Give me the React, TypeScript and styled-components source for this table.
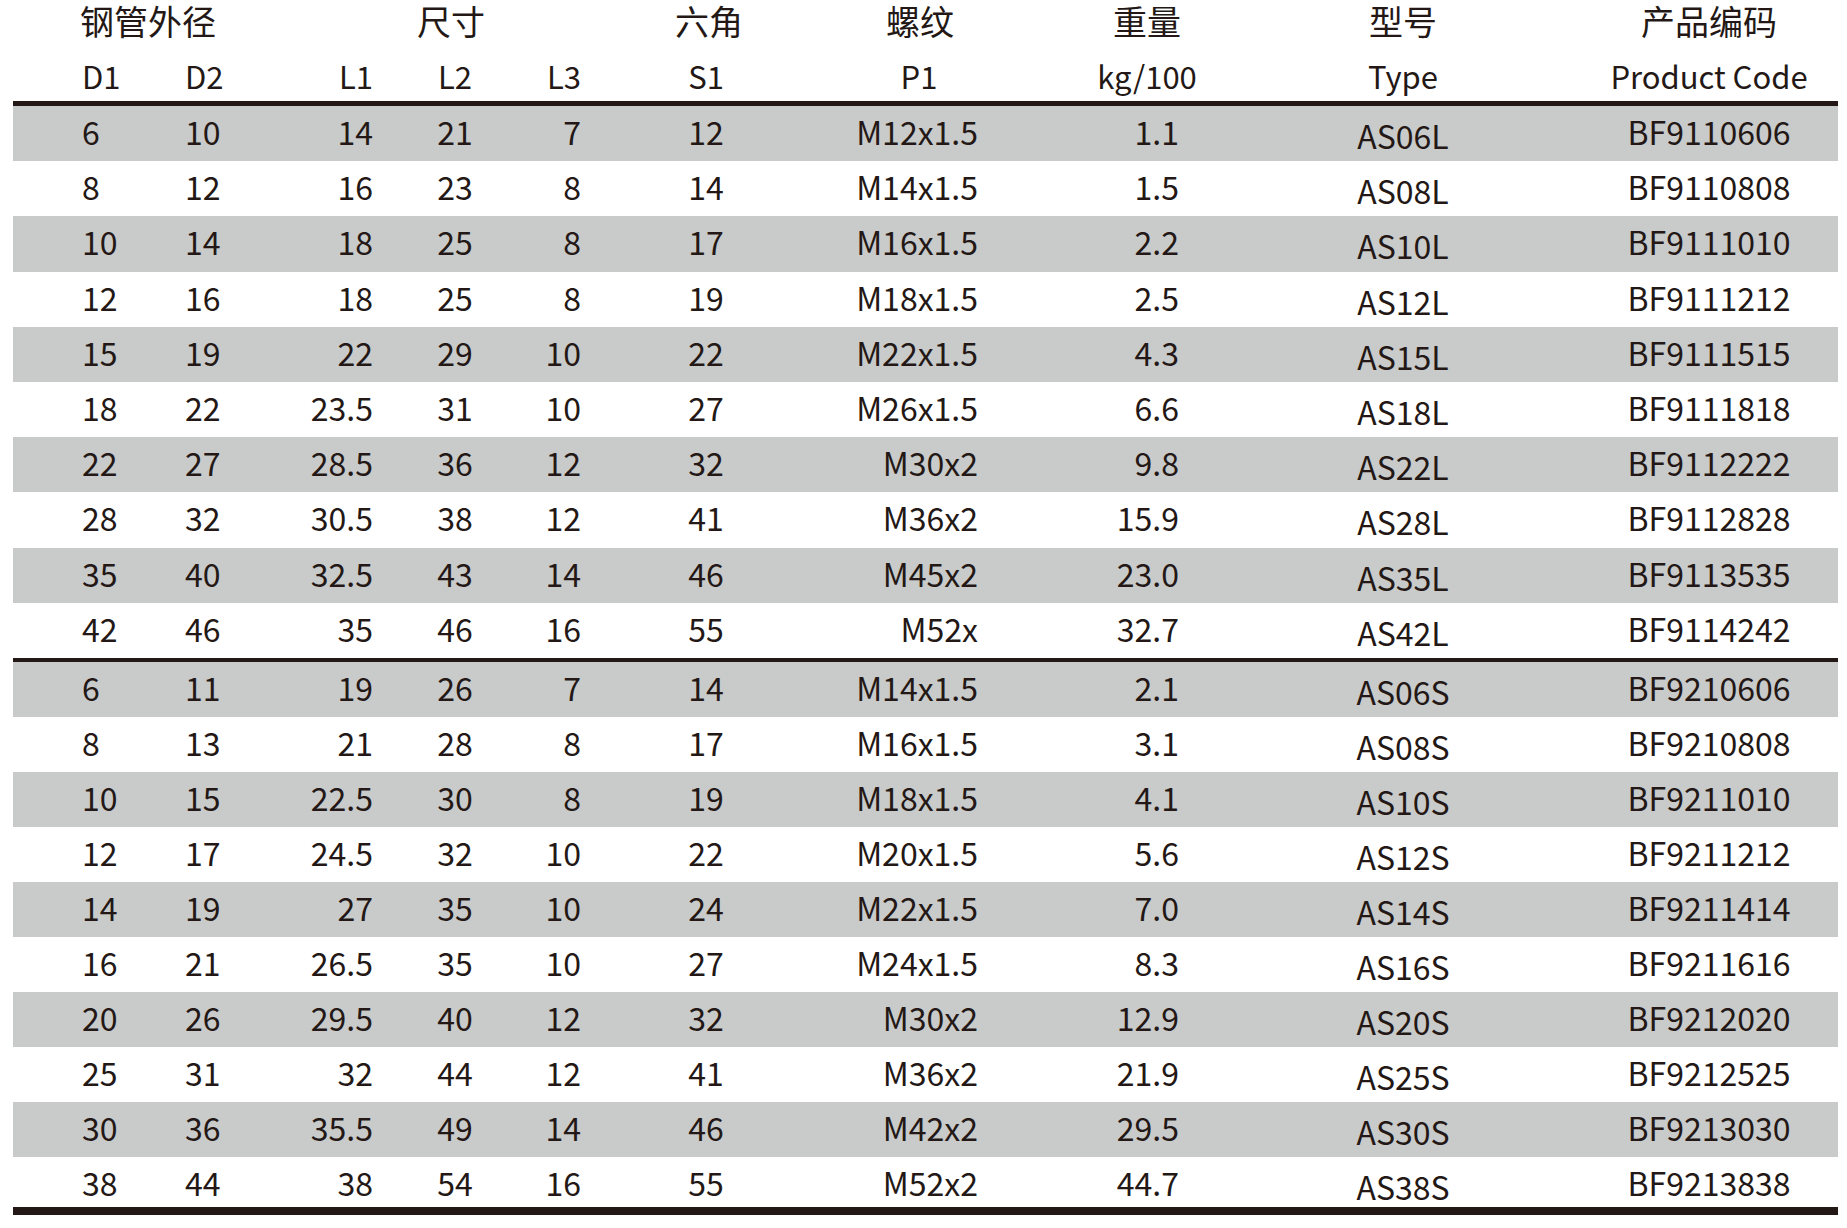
import React from 'react';
import styled, { createGlobalStyle } from 'styled-components';

const ink = '#231815';
const stripe = '#c9caca';

const GlobalStyle = createGlobalStyle`
  html, body {
    margin: 0;
    padding: 0;
    background: #ffffff;
  }
  body {
    font-family: "Noto Sans CJK SC", "Noto Sans", sans-serif;
    color: ${ink};
  }
`;

type Align = 'left' | 'center' | 'right';

interface ColSpec {
  align: Align;
  pl?: number;
  pr?: number;
  drop?: number;
  headAlign?: Align;
  headPl?: number;
  headPr?: number;
}

// one entry per column: how data cells and the english header line up
const cols: ColSpec[] = [
  { align: 'left', pl: 69 },
  { align: 'left', pl: 15 },
  { align: 'right', pr: 27 },
  { align: 'center' },
  { align: 'right', pr: 39 },
  { align: 'center' },
  { align: 'right', pr: 62, headAlign: 'center', headPl: 6 },
  { align: 'right', pr: 81, headAlign: 'center', headPr: 6 },
  { align: 'center', drop: 4 },
  { align: 'center', pl: 34 },
];

const subHeads = ['D1', 'D2', 'L1', 'L2', 'L3', 'S1', 'P1', 'kg/100', 'Type', 'Product Code'];

const topHeads = [
  { text: '钢管外径', span: 2, align: 'left' as Align, pl: 67 },
  { text: '尺寸', span: 3, align: 'center' as Align, pl: 12 },
  { text: '六角', span: 1, align: 'center' as Align, pl: 6 },
  { text: '螺纹', span: 1, align: 'center' as Align, pl: 8 },
  { text: '重量', span: 1, align: 'center' as Align, pr: 6 },
  { text: '型号', span: 1, align: 'center' as Align },
  { text: '产品编码', span: 1, align: 'center' as Align, pl: 34 },
];

const longRows = [
  ['6', '10', '14', '21', '7', '12', 'M12x1.5', '1.1', 'AS06L', 'BF9110606'],
  ['8', '12', '16', '23', '8', '14', 'M14x1.5', '1.5', 'AS08L', 'BF9110808'],
  ['10', '14', '18', '25', '8', '17', 'M16x1.5', '2.2', 'AS10L', 'BF9111010'],
  ['12', '16', '18', '25', '8', '19', 'M18x1.5', '2.5', 'AS12L', 'BF9111212'],
  ['15', '19', '22', '29', '10', '22', 'M22x1.5', '4.3', 'AS15L', 'BF9111515'],
  ['18', '22', '23.5', '31', '10', '27', 'M26x1.5', '6.6', 'AS18L', 'BF9111818'],
  ['22', '27', '28.5', '36', '12', '32', 'M30x2', '9.8', 'AS22L', 'BF9112222'],
  ['28', '32', '30.5', '38', '12', '41', 'M36x2', '15.9', 'AS28L', 'BF9112828'],
  ['35', '40', '32.5', '43', '14', '46', 'M45x2', '23.0', 'AS35L', 'BF9113535'],
  ['42', '46', '35', '46', '16', '55', 'M52x', '32.7', 'AS42L', 'BF9114242'],
];

const shortRows = [
  ['6', '11', '19', '26', '7', '14', 'M14x1.5', '2.1', 'AS06S', 'BF9210606'],
  ['8', '13', '21', '28', '8', '17', 'M16x1.5', '3.1', 'AS08S', 'BF9210808'],
  ['10', '15', '22.5', '30', '8', '19', 'M18x1.5', '4.1', 'AS10S', 'BF9211010'],
  ['12', '17', '24.5', '32', '10', '22', 'M20x1.5', '5.6', 'AS12S', 'BF9211212'],
  ['14', '19', '27', '35', '10', '24', 'M22x1.5', '7.0', 'AS14S', 'BF9211414'],
  ['16', '21', '26.5', '35', '10', '27', 'M24x1.5', '8.3', 'AS16S', 'BF9211616'],
  ['20', '26', '29.5', '40', '12', '32', 'M30x2', '12.9', 'AS20S', 'BF9212020'],
  ['25', '31', '32', '44', '12', '41', 'M36x2', '21.9', 'AS25S', 'BF9212525'],
  ['30', '36', '35.5', '49', '14', '46', 'M42x2', '29.5', 'AS30S', 'BF9213030'],
  ['38', '44', '38', '54', '16', '55', 'M52x2', '44.7', 'AS38S', 'BF9213838'],
];

export default function App() {
  return (
    <>
      <GlobalStyle />
      <Sheet>
        <TopHeadRow>
          {topHeads.map((h) => (
            <TopHeadCell key={h.text} $span={h.span} $align={h.align} $pl={h.pl} $pr={h.pr}>
              {h.text}
            </TopHeadCell>
          ))}
        </TopHeadRow>
        <SubHeadRow>
          {subHeads.map((t, i) => {
            const c = cols[i];
            return (
              <SubHeadCell
                key={t}
                $align={c.headAlign ?? c.align}
                $pl={c.headAlign ? c.headPl : c.pl}
                $pr={c.headAlign ? c.headPr : c.pr}
              >
                {t}
              </SubHeadCell>
            );
          })}
        </SubHeadRow>
        <Rule $weight={5} />
        <RowGroup rows={longRows} height={55.2} lastHeight={55.2} />
        <Rule $weight={4} />
        <RowGroup rows={shortRows} height={55} lastHeight={50} />
        <Rule $weight={8} />
      </Sheet>
    </>
  );
}

function RowGroup({ rows, height, lastHeight }: { rows: string[][]; height: number; lastHeight: number }) {
  return (
    <Group>
      {rows.map((row, r) => (
        <DataRow key={row[9]} $shaded={r % 2 === 0} $h={r === rows.length - 1 ? lastHeight : height}>
          {row.map((v, i) => {
            const c = cols[i];
            return (
              <DataCell key={i} $align={c.align} $pl={c.pl} $pr={c.pr} $drop={c.drop}>
                {v}
              </DataCell>
            );
          })}
        </DataRow>
      ))}
    </Group>
  );
}

const tracks = '157px 100px 130px 110px 110px 172px 248px 220px 286px 292px';

const Sheet = styled.div`
  width: 1847px;
  height: 1228px;
  padding: 0 9px 0 13px;
  box-sizing: border-box;
  display: flex;
  flex-direction: column;
`;

const TopHeadRow = styled.div`
  display: grid;
  grid-template-columns: ${tracks};
  height: 42px;
  font-size: 34px;
  line-height: 42px;
`;

interface CellProps {
  $align: Align;
  $pl?: number;
  $pr?: number;
}

const TopHeadCell = styled.div<CellProps & { $span: number }>`
  grid-column: span ${(p) => p.$span};
  text-align: ${(p) => p.$align};
  padding-left: ${(p) => p.$pl ?? 0}px;
  padding-right: ${(p) => p.$pr ?? 0}px;
  white-space: nowrap;
`;

const SubHeadRow = styled.div`
  display: grid;
  grid-template-columns: ${tracks};
  height: 59px;
  box-sizing: border-box;
  padding-top: 11px;
  font-size: 31px;
  line-height: 46px;
`;

const SubHeadCell = styled.div<CellProps>`
  text-align: ${(p) => p.$align};
  padding-left: ${(p) => p.$pl ?? 0}px;
  padding-right: ${(p) => p.$pr ?? 0}px;
  white-space: nowrap;
`;

const Rule = styled.div<{ $weight: number }>`
  height: ${(p) => p.$weight}px;
  flex-shrink: 0;
  background: ${ink};
`;

const Group = styled.div`
  display: flex;
  flex-direction: column;
`;

const DataRow = styled.div<{ $shaded: boolean; $h: number }>`
  display: grid;
  grid-template-columns: ${tracks};
  height: ${(p) => p.$h}px;
  background: ${(p) => (p.$shaded ? stripe : 'transparent')};
  font-size: 32px;
`;

const DataCell = styled.div<CellProps & { $drop?: number }>`
  text-align: ${(p) => p.$align};
  padding-left: ${(p) => p.$pl ?? 0}px;
  padding-right: ${(p) => p.$pr ?? 0}px;
  padding-top: ${(p) => p.$drop ?? 0}px;
  line-height: 50px;
  white-space: nowrap;
`;
